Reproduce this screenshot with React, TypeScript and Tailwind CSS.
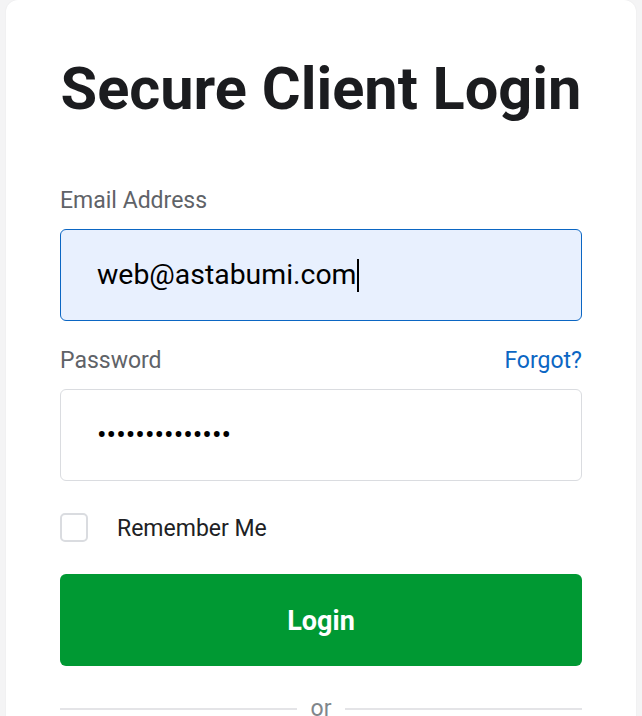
export default function App() {
  return (
    <main className="min-h-screen bg-[#f4f4f5] px-[6px] font-['Roboto',sans-serif]">
      <div className="rounded-t-[12px] bg-white px-[54px] pt-[53px] pb-10 shadow-[0_0_2px_rgba(0,0,0,0.06)]">
        <h1 className="whitespace-nowrap text-center text-[59.5px] font-bold leading-[72px] text-[#1b1c1f]">
          Secure Client Login
        </h1>

        <form className="mt-[58px] flex flex-col">
          <label className="text-[23px] leading-[36px] text-[#5f6368]">Email Address</label>
          <div className="mt-[10px] flex h-[92px] items-center rounded-[6px] border border-[#0b66c3] bg-[#e8f0fe] pl-[36px] text-[28.4px] text-black">
            <span>web@astabumi.com</span>
            <span className="ml-px inline-block h-[33px] w-[2px] bg-black" />
          </div>

          <div className="mt-[22px] flex items-center justify-between">
            <label className="text-[23px] leading-[36px] text-[#5f6368]">Password</label>
            <a href="#" className="text-[23px] leading-[36px] text-[#0b66c3]">
              Forgot?
            </a>
          </div>
          <div className="mt-[10px] flex h-[92px] items-center rounded-[6px] border border-[#dadce0] bg-white pl-[36px] text-[28.4px] text-black">
            ••••••••••••••
          </div>

          <div className="mt-[28px] flex h-[36px] items-center">
            <span className="h-[29px] w-[28px] rounded-[5px] border-2 border-[#dadce0] bg-white" />
            <span className="ml-[29px] mt-[3px] text-[23px] leading-[36px] text-[#202124]">Remember Me</span>
          </div>

          <button
            type="button"
            className="mt-[29px] h-[92px] rounded-[6px] bg-[#009933] pt-[2px] text-[27px] font-bold text-white"
          >
            Login
          </button>

          <div className="mt-[29px] flex items-center gap-[14px]">
            <div className="h-[2px] flex-1 bg-[#e4e4e7]" />
            <span className="text-[23px] leading-[28px] text-[#80868b]">or</span>
            <div className="h-[2px] flex-1 bg-[#e4e4e7]" />
          </div>
        </form>
      </div>
    </main>
  );
}
